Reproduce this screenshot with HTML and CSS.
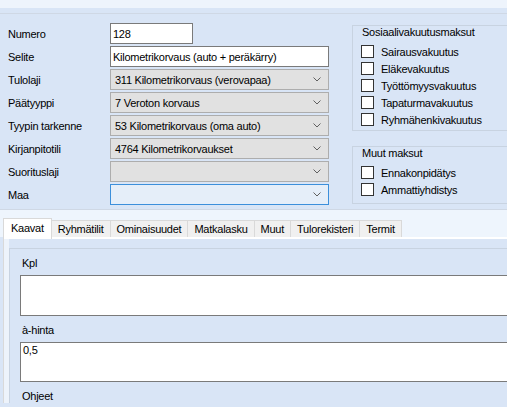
FILE: index.html
```html
<!doctype html>
<html lang="fi">
  <head>
    <meta charset="utf-8">
    <title>Palkkalaji</title>
    <link rel="stylesheet" href="styles.css">
  </head>
  <body>
    <div class="topbar"></div>

    <div class="form">
      <div class="fields">
        <label class="lbl">Numero</label>
        <input class="txt short" value="128">

        <label class="lbl">Selite</label>
        <input class="txt" value="Kilometrikorvaus (auto + peräkärry)">

        <label class="lbl">Tulolaji</label>
        <div class="combo"><span>311 Kilometrikorvaus (verovapaa)</span><svg class="chev" width="8" height="5" viewBox="0 0 8 5"><path d="M0.5 0.5 L4 4 L7.5 0.5" /></svg></div>

        <label class="lbl">Päätyyppi</label>
        <div class="combo"><span>7 Veroton korvaus</span><svg class="chev" width="8" height="5" viewBox="0 0 8 5"><path d="M0.5 0.5 L4 4 L7.5 0.5" /></svg></div>

        <label class="lbl">Tyypin tarkenne</label>
        <div class="combo"><span>53 Kilometrikorvaus (oma auto)</span><svg class="chev" width="8" height="5" viewBox="0 0 8 5"><path d="M0.5 0.5 L4 4 L7.5 0.5" /></svg></div>

        <label class="lbl">Kirjanpitotili</label>
        <div class="combo"><span>4764 Kilometrikorvaukset</span><svg class="chev" width="8" height="5" viewBox="0 0 8 5"><path d="M0.5 0.5 L4 4 L7.5 0.5" /></svg></div>

        <label class="lbl">Suorituslaji</label>
        <div class="combo"><span></span><svg class="chev" width="8" height="5" viewBox="0 0 8 5"><path d="M0.5 0.5 L4 4 L7.5 0.5" /></svg></div>

        <label class="lbl">Maa</label>
        <div class="combo hot"><span></span><svg class="chev" width="8" height="5" viewBox="0 0 8 5"><path d="M0.5 0.5 L4 4 L7.5 0.5" /></svg></div>
      </div>

      <div class="side">
        <div class="group first">
          <div class="group-title">Sosiaalivakuutusmaksut</div>
          <div class="check"><span class="box"></span>Sairausvakuutus</div>
          <div class="check"><span class="box"></span>Eläkevakuutus</div>
          <div class="check"><span class="box"></span>Työttömyysvakuutus</div>
          <div class="check"><span class="box"></span>Tapaturmavakuutus</div>
          <div class="check"><span class="box"></span>Ryhmähenkivakuutus</div>
        </div>
        <div class="group second">
          <div class="group-title">Muut maksut</div>
          <div class="check"><span class="box"></span>Ennakonpidätys</div>
          <div class="check"><span class="box"></span>Ammattiyhdistys</div>
        </div>
      </div>
    </div>

    <div class="tabstrip">
      <div class="tab active">Kaavat</div>
      <div class="tab">Ryhmätilit</div>
      <div class="tab">Ominaisuudet</div>
      <div class="tab">Matkalasku</div>
      <div class="tab">Muut</div>
      <div class="tab">Tulorekisteri</div>
      <div class="tab">Termit</div>
    </div>

    <div class="tabbody">
      <div class="panel">
        <div class="inner">
          <div class="area-label">Kpl</div>
          <textarea class="area tall"></textarea>
          <div class="area-label">à-hinta</div>
          <textarea class="area">0,5</textarea>
          <div class="area-label">Ohjeet</div>
        </div>
      </div>
    </div>
  </body>
</html>
```

FILE: styles.css
```css
html, body {
  margin: 0;
  padding: 0;
}

body {
  width: 507px;
  height: 407px;
  overflow: hidden;
  background-color: #d9e5f6;
  font-family: "Liberation Sans", Arial, sans-serif;
  font-size: 11px;
  letter-spacing: -0.25px;
  color: #000;
}

.topbar {
  height: 8px;
  background-color: #eef4fc;
  border-bottom: 5px solid #d9e5f6;
}

/* upper form */
.form {
  display: flex;
  height: 195px;
  border-top: 1px solid #cfd8e5;
  border-bottom: 1px solid #cfd8e5;
}

.fields {
  width: 344px;
  padding: 9px 0 0 8px;
  display: grid;
  grid-template-columns: 102px 219px;
  grid-auto-rows: 21px;
  row-gap: 2px;
  align-content: start;
}

.lbl {
  display: flex;
  align-items: center;
}

.txt {
  box-sizing: border-box;
  height: 21px;
  margin: 0;
  padding: 0 2px;
  border: 1px solid #7a7a7a;
  background-color: #fff;
  font: inherit;
  letter-spacing: inherit;
  color: #000;
  outline: none;
}

.txt.short {
  width: 83px;
}

.combo {
  box-sizing: border-box;
  height: 21px;
  display: flex;
  align-items: center;
  justify-content: space-between;
  padding: 0 7px 0 4px;
  border: 1px solid #adadad;
  background-color: #e1e1e1;
}

.combo.hot {
  border-color: #3c8fdb;
  background-color: #e5eef9;
}

.chev path {
  fill: none;
  stroke: #606060;
  stroke-width: 1;
}

/* group boxes, cut off by the right edge of the window */
.side {
  flex: 1;
  min-width: 0;
  padding-top: 11px;
}

.group {
  box-sizing: border-box;
  width: 155px;
  border: 1px solid #c8d3e1;
  border-right: none;
  padding-left: 8px;
}

.group.first {
  height: 106px;
}

.group.second {
  margin-top: 15px;
  height: 58px;
}

.group-title {
  display: inline-block;
  margin: -7px 0 4px 0;
  padding: 0 1px;
  line-height: 13px;
  background-color: #d9e5f6;
}

.check {
  display: flex;
  align-items: center;
  height: 17px;
}

.box {
  box-sizing: border-box;
  width: 13px;
  height: 13px;
  margin-right: 7px;
  border: 1px solid #333;
  background-color: #fff;
}

/* tabs */
.tabstrip {
  display: flex;
  align-items: flex-end;
  height: 27px;
  padding-left: 3px;
  background-color: #eef5fd;
}

.tab {
  box-sizing: border-box;
  height: 17px;
  padding: 0 6px;
  display: flex;
  align-items: center;
  border: 1px solid #d9d9d9;
  border-bottom: none;
  border-left: none;
  background-color: #f0f0f0;
}

.tab.active {
  height: 21px;
  margin-bottom: -2px;
  padding: 3px 7px 0 7px;
  border-left: 1px solid #d9d9d9;
  background-color: #fff;
  align-items: flex-start;
  position: relative;
  z-index: 1;
}

.tabbody {
  border-top: 2px solid #fff;
  margin-left: 3px;
  border-left: 1px solid #d9d9d9;
  background-color: #edf3fb;
  padding-left: 5px;
}

.panel {
  background-color: #d9e5f6;
  padding-top: 9px;
}

.inner {
  border-top: 1px solid #c8d3e1;
  border-left: 1px solid #c8d3e1;
  padding: 8px 0 0 10px;
}

.area-label {
  line-height: 13px;
  margin-left: 2px;
}

.area {
  display: block;
  box-sizing: border-box;
  width: 100%;
  height: 40px;
  margin: 5px 0 8px 0;
  padding: 1px 2px;
  border: 1px solid #7a7a7a;
  border-right: none;
  background-color: #fff;
  font: inherit;
  letter-spacing: inherit;
  line-height: 13px;
  resize: none;
  overflow: hidden;
  outline: none;
}

.area.tall {
  height: 41px;
}
```
